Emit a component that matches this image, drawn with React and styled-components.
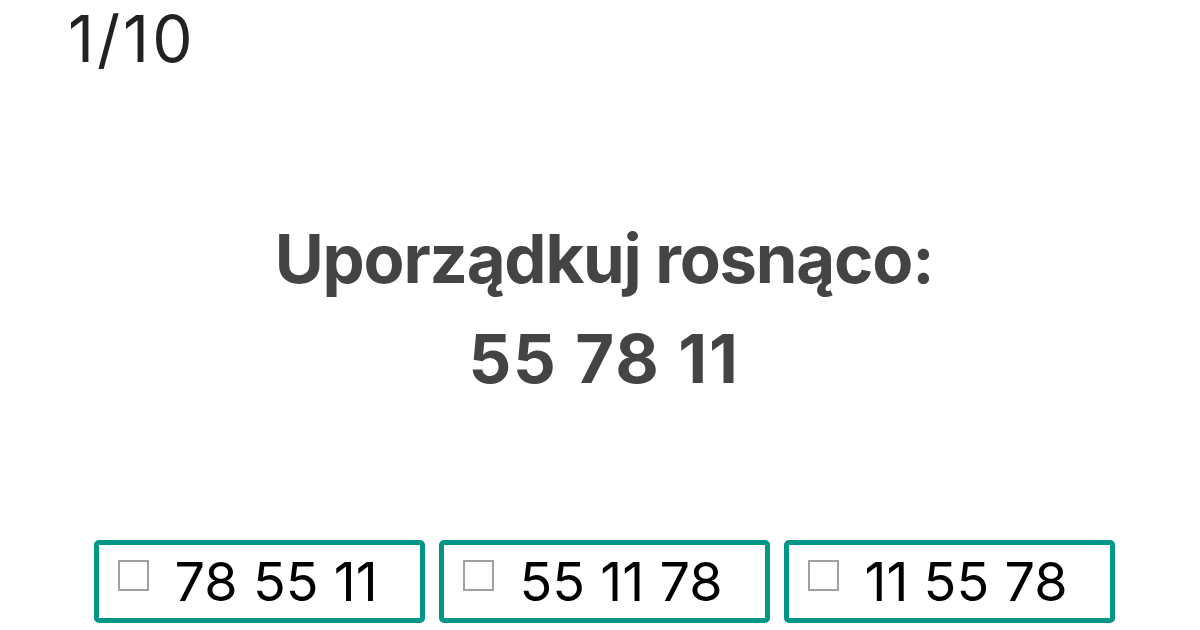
import { createGlobalStyle, styled } from 'styled-components'

const GlobalStyle = createGlobalStyle`
  html, body {
    margin: 0;
    padding: 0;
    background: #ffffff;
  }
  body {
    font-family: Inter, "Liberation Sans", sans-serif;
  }
`

const Page = styled.div`
  width: 1200px;
  height: 630px;
  overflow: hidden;
  display: flex;
  flex-direction: column;
  padding-left: 8px;
  box-sizing: border-box;
`

const Counter = styled.div`
  padding: 4px 0 0 60px;
  font-size: 64px;
  line-height: 70px;
  font-weight: 400;
  color: #222222;
  letter-spacing: 3px;
`

const Question = styled.div`
  margin-top: 135px;
  text-align: center;
  color: #444444;
  font-weight: 700;
  font-size: 67px;
  line-height: 100px;
  letter-spacing: -1.2px;
`

const Numbers = styled.span`
  letter-spacing: 1.8px;
`

const Options = styled.div`
  margin-top: 131px;
  display: flex;
  justify-content: center;
  gap: 14px;
`

const Option = styled.button`
  box-sizing: border-box;
  width: 331px;
  height: 83px;
  border: 5px solid #009688;
  border-radius: 5px;
  background: #ffffff;
  display: flex;
  align-items: center;
  padding: 0 0 0 19px;
  font-family: Inter, "Liberation Sans", sans-serif;
  font-size: 54px;
  color: #000000;
  letter-spacing: 0;
  cursor: pointer;
`

const Box = styled.span`
  box-sizing: border-box;
  width: 31px;
  height: 31px;
  border: 2px solid #a0a0a0;
  margin: -12px 26px 0 0;
  flex: none;
`

const options = ['78 55 11', '55 11 78', '11 55 78']

const App = () => {
  return (
    <Page>
      <GlobalStyle />
      <Counter>1/10</Counter>
      <Question>
        Uporządkuj rosnąco:
        <br />
        <Numbers>55 78 11</Numbers>
      </Question>
      <Options>
        {options.map((o) => (
          <Option key={o}>
            <Box />
            {o}
          </Option>
        ))}
      </Options>
    </Page>
  )
}

export default App
